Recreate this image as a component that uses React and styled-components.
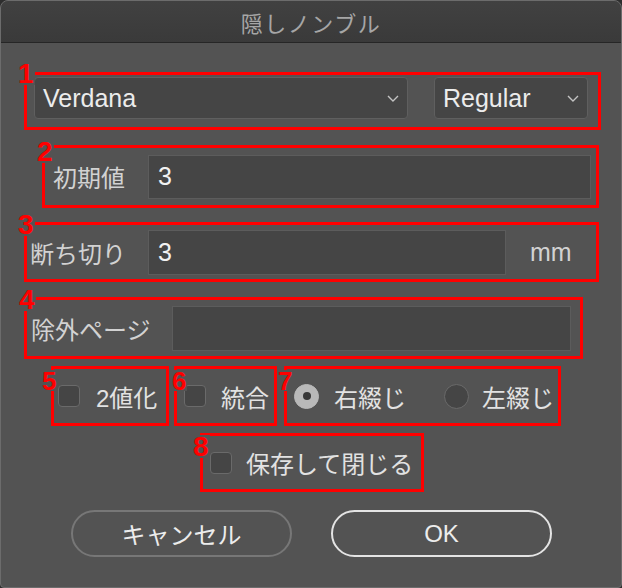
import React from 'react';
import styled, { createGlobalStyle } from 'styled-components';

const GlobalStyle = createGlobalStyle`
  html, body {
    margin: 0;
    padding: 0;
    background: #2e2e2e;
  }
  * {
    box-sizing: border-box;
  }
`;

const FONT = `"Liberation Sans", "Noto Sans CJK JP", sans-serif`;

const Window = styled.div`
  width: 622px;
  height: 588px;
  background: #535353;
  border: 1px solid #6c6c6c;
  border-radius: 8px 8px 4px 4px;
  overflow: hidden;
  font-family: ${FONT};
  display: flex;
  flex-direction: column;
`;

const TitleBar = styled.div`
  height: 42px;
  flex: none;
  display: flex;
  align-items: center;
  justify-content: center;
  background: linear-gradient(#414141, #3a3a3a);
  border-bottom: 1px solid #262626;
  color: #a6a6a6;
  font-size: 22px;
  letter-spacing: 1.5px;
`;

const Body = styled.div`
  display: flex;
  flex-direction: column;
  align-items: flex-start;
  padding-top: 29px;
`;

// red annotation frame around each part
const Mark = styled.div`
  position: relative;
  display: flex;
  align-items: ${p => p.$align || 'center'};
  width: ${p => p.$w}px;
  height: ${p => p.$h}px;
  margin-top: ${p => p.$mt || 0}px;
  margin-left: ${p => p.$ml || 0}px;
  padding: ${p => p.$pad || '0'};
  border: 3px solid #ff0000;
  flex: none;
`;

const Badge = styled.span`
  position: absolute;
  left: ${p => p.$x}px;
  top: ${p => p.$y}px;
  background: #535353;
  color: #ff0000;
  font-family: "Liberation Sans", sans-serif;
  font-weight: 700;
  font-size: ${p => p.$size || 28}px;
  line-height: 0.78;
  padding: 1px 1px 0 0;
`;

const Select = styled.div`
  width: ${p => p.$w}px;
  height: 42px;
  flex: none;
  display: flex;
  align-items: center;
  justify-content: space-between;
  padding: 0 8px 0 8px;
  background: #454545;
  border: 1px solid #5f5f5f;
  border-radius: 4px;
  color: #ececec;
  font-size: 25px;
  margin-right: ${p => p.$mr || 0}px;
`;

const Label = styled.span`
  width: ${p => p.$w}px;
  flex: none;
  color: #d2d2d2;
  font-size: 24px;
  margin-left: ${p => p.$ml || 0}px;
  white-space: nowrap;
`;

const TextInput = styled.input`
  width: ${p => p.$w}px;
  height: ${p => p.$h || 45}px;
  flex: none;
  background: #454545;
  border: 1px solid #5c5c5c;
  border-radius: 0;
  outline: none;
  color: #f2f2f2;
  font-family: ${FONT};
  font-size: 25px;
  padding: 0 9px;
`;

const Unit = styled.span`
  margin-left: 24px;
  color: #d2d2d2;
  font-size: 25px;
`;

const Box = styled.span`
  width: 22px;
  height: 22px;
  flex: none;
  background: #454545;
  border: 1px solid #6a6a6a;
  border-radius: 4px;
  margin-left: ${p => p.$ml || 0}px;
`;

const Radio = styled.span`
  width: 25px;
  height: 25px;
  flex: none;
  border-radius: 50%;
  display: flex;
  align-items: center;
  justify-content: center;
  background: ${p => (p.$on ? '#b9b9b9' : '#454545')};
  border: 1px solid ${p => (p.$on ? '#b9b9b9' : '#6a6a6a')};
  margin-left: ${p => p.$ml || 0}px;

  &::after {
    content: '';
    display: ${p => (p.$on ? 'block' : 'none')};
    width: 8px;
    height: 8px;
    border-radius: 50%;
    background: #383838;
  }
`;

const OptionText = styled.span`
  margin-left: ${p => p.$ml || 16}px;
  color: #e2e2e2;
  font-size: 24px;
  white-space: nowrap;
`;

const Row = styled.div`
  display: flex;
  margin-top: 7px;
`;

const Buttons = styled.div`
  display: flex;
  gap: 39px;
  margin-top: 18px;
  margin-left: 70px;
`;

const Button = styled.button`
  width: 221px;
  height: 47px;
  border-radius: 24px;
  background: transparent;
  border: 2px solid ${p => (p.$primary ? '#e4e4e4' : '#777777')};
  color: #ececec;
  font-family: ${FONT};
  font-size: 24px;
  padding: 0;
`;

function Chevron() {
  return (
    <svg width="12" height="7" viewBox="0 0 12 7">
      <path d="M1 1 L6 6 L11 1" fill="none" stroke="#c4c4c4" strokeWidth="1.4" />
    </svg>
  );
}

export default function App() {
  return (
    <>
      <GlobalStyle />
      <Window>
        <TitleBar>隠しノンブル</TitleBar>
        <Body>
          <Mark $w={577} $h={58} $ml={23} $align="flex-start" $pad="2px 0 0 7px">
            <Badge $x={-9} $y={-13}>1</Badge>
            <Select $w={374} $mr={26}>Verdana<Chevron /></Select>
            <Select $w={154}>Regular<Chevron /></Select>
          </Mark>

          <Mark $w={557} $h={63} $mt={15} $ml={41}>
            <Badge $x={-8} $y={-8}>2</Badge>
            <Label $w={95} $ml={8}>初期値</Label>
            <TextInput $w={443} $h={44} defaultValue="3" readOnly />
          </Mark>

          <Mark $w={575} $h={60} $mt={14} $ml={23}>
            <Badge $x={-9} $y={-12}>3</Badge>
            <Label $w={118} $ml={3}>断ち切り</Label>
            <TextInput $w={358} defaultValue="3" readOnly />
            <Unit>mm</Unit>
          </Mark>

          <Mark $w={559} $h={62} $mt={15} $ml={23}>
            <Badge $x={-8} $y={-12}>4</Badge>
            <Label $w={141} $ml={4}>除外ページ</Label>
            <TextInput $w={399} defaultValue="" readOnly />
          </Mark>

          <Row>
            <Mark $w={118} $h={60} $ml={50}>
              <Badge $x={-12} $y={1} $size={26}>5</Badge>
              <Box $ml={4} />
              <OptionText $ml={16}>2値化</OptionText>
            </Mark>
            <Mark $w={103} $h={60} $ml={5}>
              <Badge $x={-5} $y={1} $size={26}>6</Badge>
              <Box $ml={7} />
              <OptionText $ml={15}>統合</OptionText>
            </Mark>
            <Mark $w={277} $h={60} $ml={7}>
              <Badge $x={-9} $y={1} $size={26}>7</Badge>
              <Radio $on $ml={7} />
              <OptionText $ml={15}>右綴じ</OptionText>
              <Radio $ml={38} />
              <OptionText $ml={13}>左綴じ</OptionText>
            </Mark>
          </Row>

          <Mark $w={224} $h={59} $mt={7} $ml={199}>
            <Badge $x={-10} $y={-1}>8</Badge>
            <Box $ml={7} />
            <OptionText $ml={14}>保存して閉じる</OptionText>
          </Mark>

          <Buttons>
            <Button>キャンセル</Button>
            <Button $primary>OK</Button>
          </Buttons>
        </Body>
      </Window>
    </>
  );
}
